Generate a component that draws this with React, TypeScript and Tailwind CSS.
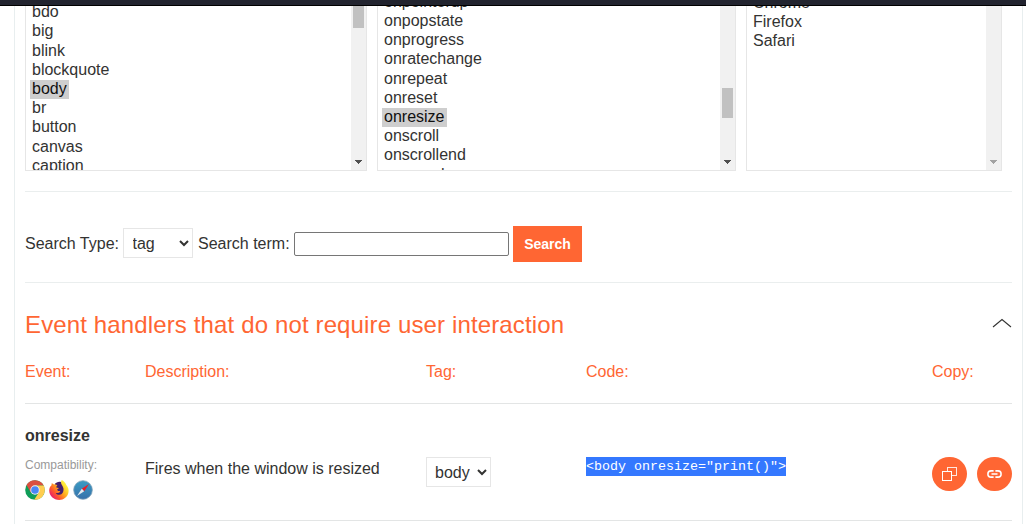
import React from "react";

const tags = ["bdo", "big", "blink", "blockquote", "body", "br", "button", "canvas", "caption"];
const events = [
  "onpointerup",
  "onpopstate",
  "onprogress",
  "onratechange",
  "onrepeat",
  "onreset",
  "onresize",
  "onscroll",
  "onscrollend",
  "onsearch",
];
const browsers = ["Chrome", "Firefox", "Safari"];

type ListProps = {
  items: string[];
  selected?: string;
  className: string;
  listClass: string;
  thumbClass?: string;
  arrow?: string;
};

function OptionList({ items, selected, className, listClass, thumbClass, arrow = "#505050" }: ListProps) {
  return (
    <div className={`flex h-[165px] overflow-hidden border border-t-0 border-[#e6e6e6] ${className}`}>
      <ul className={`flex flex-1 flex-col items-start pl-1 ${listClass}`}>
        {items.map((item) => (
          <li key={item} className="h-[19.2px] shrink-0">
            <span
              className={
                item === selected
                  ? "block h-[19px] bg-[#cecece] pr-[2.4px] pl-0.5 leading-[17px] text-[#101010]"
                  : "block px-0.5 leading-[17px]"
              }
            >
              {item}
            </span>
          </li>
        ))}
      </ul>
      <div className="flex w-[15px] flex-col items-center justify-between bg-[#f1f1f1]">
        <div className={`w-[11px] bg-[#c1c1c1] ${thumbClass ?? "h-0"}`} />
        <svg className="mb-[6px]" width="7" height="4" viewBox="0 0 7 4" shapeRendering="crispEdges">
          <path d="M0 0h7v1H6v1H5v1H4v1H3V3H2V2H1V1H0z" fill={arrow} />
        </svg>
      </div>
    </div>
  );
}

function ChromeIcon() {
  return (
    <svg width="20" height="20" viewBox="0 0 20 20">
      <circle cx="10" cy="10" r="9.8" fill="#0f9d58" />
      <path d="M1.5 5.1A9.8 9.8 0 0 1 18.7 5.6H10L5.8 12.4z" fill="#db4f40" />
      <path d="M18.7 5.6A9.8 9.8 0 0 1 9.2 19.8L14 12.3 10 5.6z" fill="#ffcd50" />
      <circle cx="10" cy="10" r="4.7" fill="#f1f1f1" />
      <circle cx="10" cy="10" r="3.8" fill="#4a86f5" />
    </svg>
  );
}

function FirefoxIcon() {
  return (
    <svg width="20" height="20" viewBox="0 0 20 20">
      <defs>
        <linearGradient id="fox" x1="0.9" y1="0.1" x2="0.1" y2="0.8">
          <stop offset="0.15" stopColor="#ffee3a" />
          <stop offset="0.5" stopColor="#ffa41e" />
          <stop offset="0.75" stopColor="#ff5a2c" />
          <stop offset="1" stopColor="#e8206a" />
        </linearGradient>
      </defs>
      <path
        d="M2.7 3.2C3.6 3.5 4.5 4 5.2 4.8 7 2.6 9.8 2 12.2 3 11.9 1.8 12.2.8 12.8 0 15 1.2 16.5 3.1 17.3 5 19.2 7.2 20 9.5 19.5 12.3 18.7 17 14.8 20 10.2 20 4.6 20 .3 15.9.2 10.6.1 8.3 1.1 6.6 2.5 5.3z"
        fill="url(#fox)"
      />
      <path
        d="M5.6 4.3C7.2 2 9.8 1.2 12 1.9 11.8 4.4 13.8 5.6 14.4 8.2 14.9 11.5 13.4 14.7 10.4 14.7 8.6 14.8 7.2 14 6.8 12.9 8.4 13.4 10.4 12.8 11.3 11.4 10.1 10.9 8.7 11.4 8 9.8 8.4 8.9 9.6 9 9.8 8L7.3 7.5C7.2 6.7 7.6 6 8.4 5.3 7.4 4.7 6.5 4.5 5.6 4.3z"
        fill="#45206f"
      />
    </svg>
  );
}

function SafariIcon() {
  return (
    <svg width="20" height="20" viewBox="0 0 20 20">
      <defs>
        <linearGradient id="saf" x1="0" y1="0" x2="0" y2="1">
          <stop offset="0" stopColor="#3b9cc4" />
          <stop offset="1" stopColor="#3670aa" />
        </linearGradient>
      </defs>
      <circle cx="10" cy="10" r="9.3" fill="url(#saf)" stroke="#7d9fb8" strokeWidth="0.8" />
      <path d="M16 4L8.8 8.8 11.2 11.2z" fill="#ed1c24" />
      <path d="M4 16L8.8 8.8 11.2 11.2z" fill="#e4eaf0" />
    </svg>
  );
}

function CopyIcon() {
  return (
    <svg width="15" height="14" viewBox="0 0 15 14" fill="none" stroke="#fff" shapeRendering="crispEdges">
      <path d="M5.5 4.5V.5h9v8h-5" strokeOpacity="0.85" />
      <path d="M.5 4.5h9v9h-9z" />
    </svg>
  );
}

function LinkIcon() {
  return (
    <svg width="15" height="8" viewBox="0 0 15 8" fill="none" stroke="#fff" strokeWidth="1.6">
      <path d="M6.6.9H4a3.1 3.1 0 0 0 0 6.2h2.6M8.4.9H11a3.1 3.1 0 0 1 0 6.2H8.4M4.5 4h6" />
    </svg>
  );
}

const selectClass = "h-[30px] border border-[#e6e6e6] bg-white pr-1 text-base text-[#333332]";
const columns = "grid grid-cols-[120px_281px_160px_346px_80px]";

export default function App() {
  return (
    <div className="h-[524px] overflow-hidden bg-white font-['Liberation_Sans',Arial,sans-serif] text-base text-[#333332]">
      <header className="h-[6px] border-b border-black bg-[#22242f]" />
      <main className="ml-[14px] h-[520px] w-[1009px] border-x border-[#e8eeef] pr-[10px] pl-[10px]">
        <section className="flex gap-[10px]">
          <OptionList items={tags} selected="body" className="w-[342px]" listClass="-mt-[2.8px]" thumbClass="h-[22px]" />
          <OptionList
            items={events}
            selected="onresize"
            className="w-[359px]"
            listClass="-mt-[13.2px]"
            thumbClass="mt-[82px] h-[30px]"
          />
          <OptionList items={browsers} className="w-[256px]" listClass="-mt-[12.2px]" arrow="#a3a3a3" />
        </section>

        <form
          className="mt-5 flex h-[92px] items-center border-y border-[#eaeeee] pt-[14px]"
          onSubmit={(e) => e.preventDefault()}
        >
          <label htmlFor="type" className="w-[98px]">Search Type:</label>
          <select id="type" className={`mb-0.5 w-[70px] pl-[4.5px] ${selectClass}`}>
            <option>tag</option>
          </select>
          <label htmlFor="term" className="ml-[5px] w-24">Search term:</label>
          <input id="term" className="h-6 w-[215px] rounded-[2px] border border-[#767676] bg-white px-1" />
          <button className="ml-1 h-9 w-[69px] bg-[#ff6633] text-sm font-bold text-white">Search</button>
        </form>

        <section className="text-[#ff6633]">
          <div className="flex h-[73px] items-center justify-between pt-[10px]">
            <h2 className="text-2xl leading-8 tracking-[0.135px]">Event handlers that do not require user interaction</h2>
            <svg className="mb-[3px]" width="20" height="10" viewBox="0 0 20 10" fill="none" stroke="#333332" strokeWidth="1.1">
              <path d="M1 9l9-7.5L19 9" />
            </svg>
          </div>
          <div className={`h-12 border-b border-[#e3e5e5] leading-[31px] ${columns}`}>
            <span>Event:</span>
            <span>Description:</span>
            <span>Tag:</span>
            <span>Code:</span>
            <span>Copy:</span>
          </div>
        </section>

        <article className={`h-[117px] border-b border-[#e3e5e5] ${columns}`}>
          <div className="flex flex-col">
            <h3 className="mt-[22px] leading-[19px] font-bold">onresize</h3>
            <p className="mt-3 text-xs leading-4 text-[#999]">Compatibility:</p>
            <div className="mt-[7px] flex gap-1">
              <ChromeIcon />
              <FirefoxIcon />
              <SafariIcon />
            </div>
          </div>
          <p className="pt-[55px] leading-[19px]">Fires when the window is resized</p>
          <div className="pt-[53px]">
            <select className={`block w-[65px] pl-1 ${selectClass}`} aria-label="Tag">
              <option>body</option>
            </select>
          </div>
          <div className="pt-[53px]">
            <code className="block w-[200px] bg-[#3478ff] font-['Liberation_Mono',monospace] text-[13.333px] leading-[19px] whitespace-nowrap text-white">
              {'<body onresize="print()">'}
            </code>
          </div>
          <div className="flex gap-[10px] pt-[53px]">
            <button aria-label="Copy code" className="flex h-[34px] w-[35px] items-center justify-center rounded-full bg-[#ff6633]">
              <CopyIcon />
            </button>
            <button aria-label="Copy link" className="flex h-[34px] w-[35px] items-center justify-center rounded-full bg-[#ff6633]">
              <LinkIcon />
            </button>
          </div>
        </article>
      </main>
    </div>
  );
}
